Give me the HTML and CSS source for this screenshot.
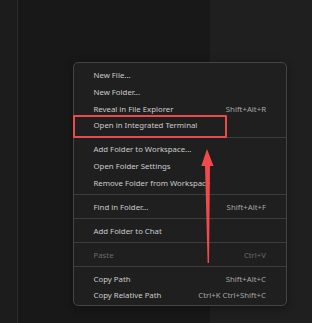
FILE: index.html
```html
<!DOCTYPE html>
<html lang="en">
<head>
  <meta charset="UTF-8" />
  <title>Explorer context menu</title>
  <link rel="stylesheet" href="styles.css">
</head>
<body>
  <div class="workbench">
    <div class="activity-strip"></div>
    <div class="sidebar"></div>
    <div class="editor"></div>

    <div class="context-menu">
      <div class="menu-item"><span class="label">New File...</span></div>
      <div class="menu-item"><span class="label">New Folder...</span></div>
      <div class="menu-item"><span class="label">Reveal in File Explorer</span><span class="keys">Shift+Alt+R</span></div>
      <div class="menu-item"><span class="label">Open in Integrated Terminal</span></div>
      <div class="separator"></div>
      <div class="menu-item"><span class="label">Add Folder to Workspace...</span></div>
      <div class="menu-item"><span class="label">Open Folder Settings</span></div>
      <div class="menu-item"><span class="label">Remove Folder from Workspace</span></div>
      <div class="separator"></div>
      <div class="menu-item"><span class="label">Find in Folder...</span><span class="keys">Shift+Alt+F</span></div>
      <div class="separator"></div>
      <div class="menu-item"><span class="label">Add Folder to Chat</span></div>
      <div class="separator"></div>
      <div class="menu-item disabled"><span class="label">Paste</span><span class="keys">Ctrl+V</span></div>
      <div class="separator"></div>
      <div class="menu-item"><span class="label">Copy Path</span><span class="keys">Shift+Alt+C</span></div>
      <div class="menu-item"><span class="label">Copy Relative Path</span><span class="keys">Ctrl+K Ctrl+Shift+C</span></div>
    </div>

    <!-- annotation: highlight + arrow -->
    <div class="highlight-box"></div>
    <svg class="arrow" width="312" height="323" viewBox="0 0 312 323">
      <polygon points="207,149 213.5,166 210,166 209,263 207.6,263 205,166 201.3,166" fill="#f04a4c"/>
    </svg>
  </div>
</body>
</html>
```

FILE: styles.css
```css
body {
  margin: 0;
  padding: 0;
  background-color: #1f1f1f;
  font-family: 'Noto Sans', 'Open Sans', sans-serif;
}

.workbench {
  position: relative;
  display: flex;
  width: 312px;
  height: 323px;
  overflow: hidden;
}

.activity-strip {
  width: 17px;
  background-color: #1c1c1c;
  border-right: 1px solid #2b2b2b;
}

.sidebar {
  width: 192px;
  background-color: #181818;
}

.editor {
  flex: 1;
  background-color: #1f1f1f;
}

.context-menu {
  position: absolute;
  left: 73px;
  top: 62px;
  width: 212px;
  padding: 4px 0 1px;
  background-color: #1f1f1f;
  border: 1px solid #454545;
  border-radius: 5px;
  box-shadow: 0 2px 8px rgba(0, 0, 0, 0.36);
}

.menu-item {
  display: flex;
  justify-content: space-between;
  align-items: center;
  height: 16.7px;
  padding: 0 20px 0 19.5px;
  font-size: 7.8px;
  color: #cccccc;
  white-space: nowrap;
}

.menu-item .keys {
  color: #a6a6a6;
  margin-left: 12px;
}

.menu-item.disabled,
.menu-item.disabled .keys {
  color: #6b6b6b;
}

.separator {
  height: 1px;
  margin: 3.15px 0;
  background-color: #3c3c3c;
}

.highlight-box {
  position: absolute;
  left: 73px;
  top: 115px;
  width: 150px;
  height: 19px;
  border: 2px solid #ea4a4c;
  border-radius: 1px;
}

.arrow {
  position: absolute;
  left: 0;
  top: 0;
}
```
